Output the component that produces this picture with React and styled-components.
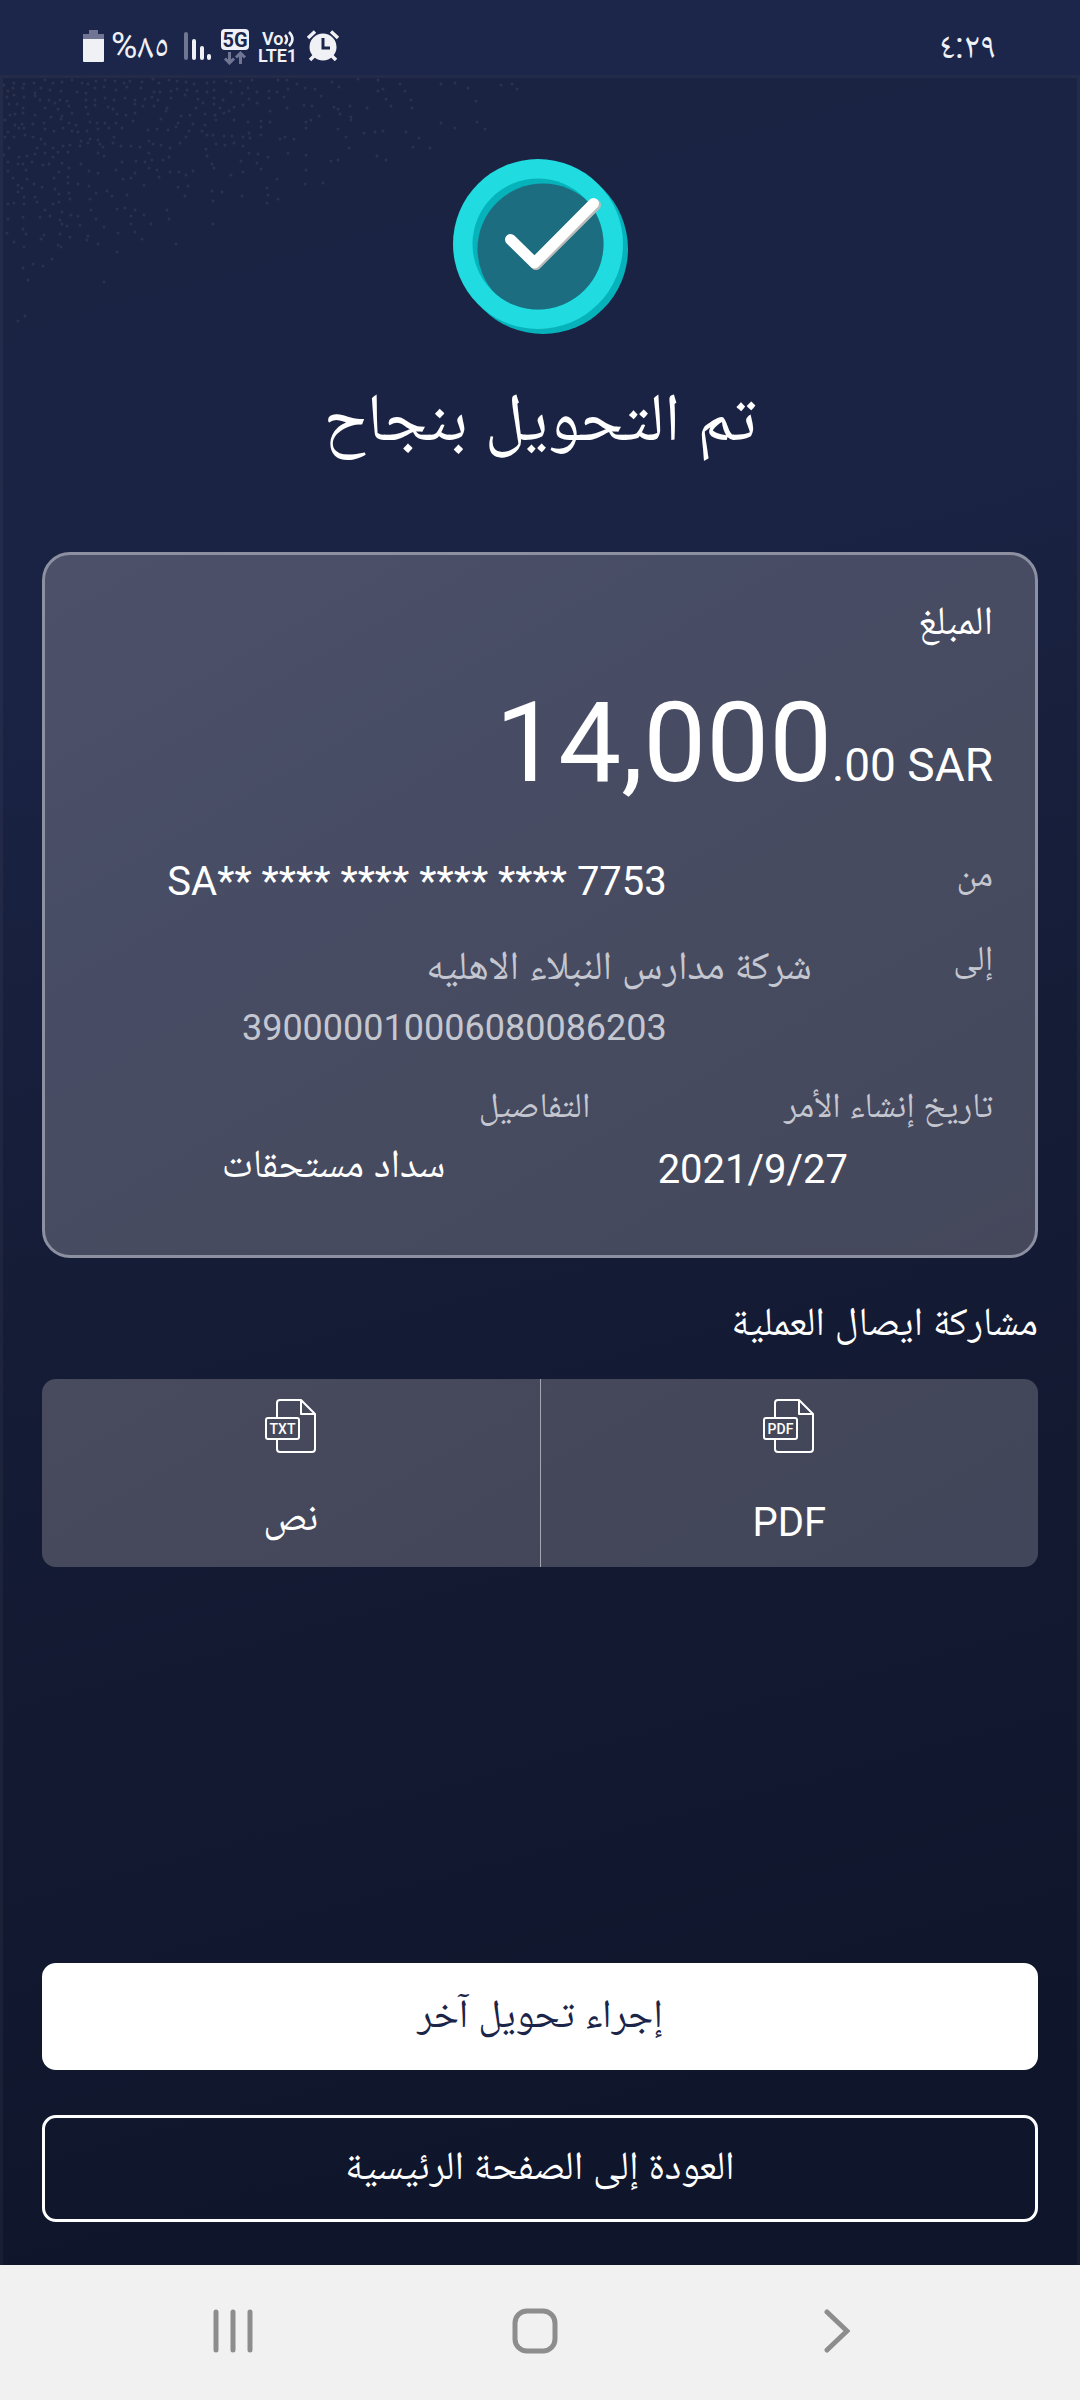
import React from "react";
import styled, { createGlobalStyle } from "styled-components";

const GlobalStyle = createGlobalStyle`
  *, *::before, *::after { box-sizing: border-box; }
  body {
    margin: 0;
    background: #f1f1f1;
    font-family: Roboto, "Noto Naskh Arabic", "Noto Sans Arabic", "DejaVu Sans", sans-serif;
    color: #ffffff;
  }
  h1, h2, p, dl, dt, dd { margin: 0; font-weight: 400; }
  button { font: inherit; cursor: pointer; }
`;

const Screen = styled.div`
  display: flex;
  flex-direction: column;
  min-height: 100vh;
`;

const StatusBar = styled.header`
  display: flex;
  align-items: center;
  justify-content: space-between;
  height: 75px;
  padding: 16px 78px 0 83px;
  background: #1c264b;
  color: #f0f1f6;
`;

const StatusGroup = styled.div`
  display: flex;
  align-items: center;
  gap: ${(p) => p.$gap || 0}px;
`;

const StatusText = styled.span`
  padding-right: 6px;
  font-size: 36px;
  line-height: 40px;
`;

const Content = styled.main`
  position: relative;
  display: flex;
  flex: 1;
  flex-direction: column;
  padding: 81px 39px 43px;
  border: 3px solid rgba(255, 255, 255, 0.04);
  border-bottom: 0;
  background: linear-gradient(165deg, #1b2342 0%, #1a2344 25%, #151c36 50%, #12182f 75%, #0f152a 92%) border-box;
`;

const Texture = styled.svg`
  position: absolute;
  top: 0;
  left: 0;
  pointer-events: none;
`;

const Hero = styled.section`
  display: flex;
  flex-direction: column;
  align-items: center;
  gap: 36px;
  margin-bottom: 89px;
`;

const Title = styled.h1`
  font-size: 68px;
  line-height: 92px;
`;

const Card = styled.section`
  padding: 38px 42px 48px;
  border: 3px solid #8c90a1;
  border-radius: 28px;
  background: linear-gradient(150deg, #4d5069 0%, #484d66 30%, #464b60 60%, #45485b 100%);
`;

const AmountLabel = styled.h2`
  font-size: 40px;
  line-height: 56px;
`;

const Amount = styled.p`
  direction: ltr;
  margin-top: 28px;
  text-align: right;
  font-size: 112px;
  line-height: 132px;
`;

const Fraction = styled.span`
  font-size: 46px;
  line-height: 46px;
`;

const Row = styled.div`
  display: grid;
  grid-template-columns: 1fr 4fr;
  margin-top: ${(p) => p.$top}px;
`;

const Columns = styled.div`
  display: grid;
  grid-template-columns: 4fr 5fr;
  margin-top: 23px;
`;

const Column = styled.div`
  display: flex;
  flex-direction: column;
  gap: 3px;
`;

const Term = styled.dt`
  color: #c5c7d0;
  font-size: 35px;
  line-height: 48px;
`;

const Value = styled.dd`
  color: ${(p) => (p.$muted ? "#c5c7d0" : "#ffffff")};
  font-size: ${(p) => (p.$small ? 36 : 40)}px;
  line-height: ${(p) => (p.$tall ? 74 : 62)}px;
  padding-inline-start: ${(p) => (p.$indent ? 145 : 0)}px;
`;

const SectionTitle = styled.h2`
  margin: 34px 0 27px;
  font-size: 40px;
  line-height: 60px;
`;

const ShareBar = styled.div`
  display: flex;
  overflow: hidden;
  border-radius: 14px;
  background: linear-gradient(150deg, #484b5e, #434759 60%, #42465a);
`;

const ShareButton = styled.button`
  display: flex;
  flex: 1;
  flex-direction: column;
  align-items: center;
  justify-content: flex-start;
  gap: 40px;
  padding: 20px 0 14px;
  border: 0;
  background: none;
  color: #ffffff;

  & + & { border-right: 1px solid #a3a6b3; }
`;

const ShareLabel = styled.span`
  font-size: 40px;
  line-height: ${(p) => (p.$tall ? 60 : 48)}px;
`;

const Actions = styled.div`
  display: flex;
  flex-direction: column;
  gap: 45px;
  margin-top: auto;
`;

const ActionButton = styled.button`
  height: 107px;
  padding: 0 0 6px;
  border: 3px solid #ffffff;
  border-radius: 14px;
  background: ${(p) => (p.$primary ? "#ffffff" : "transparent")};
  color: ${(p) => (p.$primary ? "#1b2549" : "#ffffff")};
  font-size: 40px;
  line-height: 60px;
`;

const NavBar = styled.nav`
  display: grid;
  grid-template-columns: repeat(3, 1fr);
  height: 135px;
  padding: 0 92px 0 82px;
  background: #f1f1f1;
`;

const NavButton = styled.button`
  display: flex;
  align-items: center;
  justify-content: center;
  padding: 0 0 4px;
  border: 0;
  background: none;
  color: #8d8d8d;
`;

const Battery = () => (
  <svg width="21" height="32" viewBox="0 0 21 32" aria-hidden="true">
    <path d="M6 0h9v4h6v5H0V4h6z" fill="#6f7592" />
    <path d="M0 9h21v22q0 1-1 1H1q-1 0-1-1z" fill="#f0f1f4" />
  </svg>
);

const Signal = () => (
  <svg width="28" height="32" viewBox="0 0 28 32" strokeWidth="4" strokeLinecap="round" aria-hidden="true">
    <path d="M2 4v24" stroke="#6f7592" />
    <path d="M10 11v17M18 18v10M25 26v2" stroke="#f0f1f4" />
  </svg>
);

const FiveG = () => (
  <svg width="30" height="38" viewBox="0 0 30 38" aria-hidden="true">
    <rect x="1" y="2" width="28" height="21" rx="4" fill="#f0f1f6" />
    <text x="15" y="19.500" textAnchor="middle" fontFamily="Roboto, sans-serif" fontSize="20" fontWeight="700" fill="#1c264b">5G</text>
    <path d="M9.500 25v10M5 31.500l4.500 4.500L14 31.500M20.500 37V27M16 30.500l4.500-4.500L25 30.500" fill="none" stroke="#6f7592" strokeWidth="3" />
  </svg>
);

const VoLte = () => (
  <svg width="40" height="38" viewBox="0 0 40 38" fill="#f0f1f6" aria-hidden="true">
    <g fontFamily="Roboto, sans-serif" fontSize="18" fontWeight="600">
      <text x="4" y="17.500">Vo</text>
      <text x="0" y="34.500">LTE1</text>
    </g>
    <path d="M27 8q4 4 0 9M31 5q7 7 0 14" fill="none" stroke="#f0f1f6" strokeWidth="2.500" />
  </svg>
);

const Alarm = () => (
  <svg width="34" height="32" viewBox="0 0 34 32" aria-hidden="true">
    <circle cx="17" cy="17" r="13.500" fill="#f0f1f4" />
    <path d="M2 8l7-6.500M32 8l-7-6.500M8 26l-4 4M26 26l4 4" stroke="#f0f1f4" strokeWidth="3.500" />
    <path d="M17 8v10h7" fill="none" stroke="#1c264b" strokeWidth="3" />
  </svg>
);

/* Scattered dots that thin out away from the top left corner. */
const makeDots = () => {
  let seed = 7;
  const random = () => {
    seed = (seed * 16807) % 2147483647;
    return seed / 2147483647;
  };
  let path = "";
  for (let y = 4; y < 260; y += 8) {
    for (let x = 4; x < 620; x += 9) {
      const dx = Math.round(x + random() * 6 - 3);
      const dy = Math.round(y + random() * 6 - 3);
      const distance = x / 620 + y / 260;
      if (random() > distance * 1.1 - 0.1) path += `M${dx} ${dy}h0`;
    }
  }
  return path;
};

const dots = makeDots();

const SuccessIcon = () => (
  <svg width="176" height="176" viewBox="0 0 176 176" role="img" aria-label="تم">
    <defs>
      <clipPath id="hole"><circle cx="86" cy="85" r="65.500" /></clipPath>
    </defs>
    <circle cx="91" cy="90" r="85" fill="#07b3bb" />
    <circle cx="86" cy="85" r="85" fill="#20dce1" />
    <circle cx="86" cy="85" r="65.500" fill="#07b3bb" />
    <circle cx="91" cy="90" r="65.500" fill="#1d6d80" clipPath="url(#hole)" />
    <g fill="none" strokeWidth="11" strokeLinecap="round" strokeLinejoin="round">
      <path d="M84 105.500L143.500 46" stroke="#b9bbbb" />
      <path d="M58.500 80.500L82.500 104L141.500 44.500" stroke="#ffffff" />
    </g>
  </svg>
);

const FileIcon = ({ type }) => (
  <svg width="52" height="54" viewBox="0 0 52 54" fill="none" stroke="#ffffff" strokeWidth="2" strokeLinejoin="round" aria-hidden="true">
    <path d="M12 19V4q0-3 3-3h21l14 14v35q0 3-3 3H15q-3 0-3-3V40" />
    <path d="M36 1v14h14" />
    <rect x="1" y="19" width="33" height="21" rx="2" />
    <text x="17.500" y="34.500" textAnchor="middle" fontFamily="Roboto, sans-serif" fontSize="14" fontWeight="500" fill="#ffffff" stroke="none">{type}</text>
  </svg>
);

const RecentsIcon = () => (
  <svg width="40" height="44" viewBox="0 0 40 44" stroke="currentColor" strokeWidth="5" strokeLinecap="round">
    <path d="M3 3v38M20 3v38M37 3v38" />
  </svg>
);

const HomeIcon = () => (
  <svg width="46" height="46" viewBox="0 0 46 46" fill="none" stroke="currentColor" strokeWidth="5">
    <rect x="3" y="3" width="40" height="40" rx="12" />
  </svg>
);

const BackIcon = () => (
  <svg width="26" height="44" viewBox="0 0 26 44" fill="none" stroke="currentColor" strokeWidth="5" strokeLinecap="round">
    <path d="M3 3l20 19L3 41" />
  </svg>
);

export default function App() {
  return (
    <Screen>
      <GlobalStyle />
      <StatusBar>
        <StatusGroup $gap={8}>
          <StatusGroup $gap={7}>
            <Battery />
            <StatusText>%٨٥</StatusText>
          </StatusGroup>
          <Signal />
          <FiveG />
          <VoLte />
          <Alarm />
        </StatusGroup>
        <StatusText>٤:٢٩</StatusText>
      </StatusBar>

      <Content dir="rtl" lang="ar">
        <Texture width="620" height="260" viewBox="0 0 620 260" aria-hidden="true">
          <path d={dots} stroke="#ffffff" strokeOpacity="0.07" strokeWidth="3" strokeLinecap="round" />
        </Texture>

        <Hero>
          <SuccessIcon />
          <Title>تم التحويل بنجاح</Title>
        </Hero>

        <Card>
          <AmountLabel>المبلغ</AmountLabel>
          <Amount>14,000<Fraction>.00 SAR</Fraction></Amount>
          <dl>
            <Row $top={42}>
              <Term>من</Term>
              <Value $indent><bdi dir="ltr">SA** **** **** **** **** 7753</bdi></Value>
            </Row>
            <Row $top={22}>
              <Term>إلى</Term>
              <div>
                <Value $muted>شركة مدارس النبلاء الاهليه</Value>
                <Value $small $muted $indent>390000010006080086203</Value>
              </div>
            </Row>
            <Columns>
              <Column>
                <Term>تاريخ إنشاء الأمر</Term>
                <Value $tall $indent><bdi dir="ltr">2021/9/27</bdi></Value>
              </Column>
              <Column>
                <Term>التفاصيل</Term>
                <Value $indent>سداد مستحقات</Value>
              </Column>
            </Columns>
          </dl>
        </Card>

        <SectionTitle>مشاركة ايصال العملية</SectionTitle>
        <ShareBar>
          <ShareButton type="button">
            <FileIcon type="PDF" />
            <ShareLabel $tall>PDF</ShareLabel>
          </ShareButton>
          <ShareButton type="button">
            <FileIcon type="TXT" />
            <ShareLabel>نص</ShareLabel>
          </ShareButton>
        </ShareBar>

        <Actions>
          <ActionButton type="button" $primary>إجراء تحويل آخر</ActionButton>
          <ActionButton type="button">العودة إلى الصفحة الرئيسية</ActionButton>
        </Actions>
      </Content>

      <NavBar>
        <NavButton type="button" aria-label="Recents"><RecentsIcon /></NavButton>
        <NavButton type="button" aria-label="Home"><HomeIcon /></NavButton>
        <NavButton type="button" aria-label="Back"><BackIcon /></NavButton>
      </NavBar>
    </Screen>
  );
}
